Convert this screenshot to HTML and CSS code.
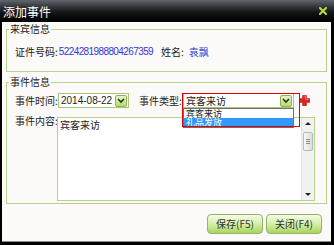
FILE: index.html
```html
<!DOCTYPE html>
<html lang="zh">
<head>
<meta charset="utf-8">
<link rel="stylesheet" href="styles.css">
</head>
<body>
<div class="window">
  <div class="titlebar">
    <span class="title">添加事件</span>
    <svg class="close" width="8" height="8" viewBox="0 0 8 8"><path d="M1 1L7 7M7 1L1 7" stroke="#b7dd3c" stroke-width="2" stroke-linecap="square"/></svg>
  </div>
  <div class="body">
    <fieldset class="fs fs1">
      <legend>来宾信息</legend>
      <div class="info-row">
        <span>证件号码:</span><span class="blue num">5224281988804267359</span><span class="name-label">姓名:</span><span class="blue">袁飘</span>
      </div>
    </fieldset>
    <fieldset class="fs fs2">
      <legend>事件信息</legend>
      <div class="form-row">
        <span class="label">事件时间:</span>
        <div class="select date">
          <span class="select-text num2">2014-08-22</span>
          <span class="arrow"><svg width="8" height="6" viewBox="0 0 8 6"><path d="M1 1L4 4L7 1" fill="none" stroke="#2b3320" stroke-width="1.6"/></svg></span>
        </div>
        <span class="label type-label">事件类型:</span>
        <div class="select-wrap">
          <div class="select type">
            <span class="select-text">宾客来访</span>
            <span class="arrow"><svg width="8" height="6" viewBox="0 0 8 6"><path d="M1 1L4 4L7 1" fill="none" stroke="#2b3320" stroke-width="1.6"/></svg></span>
          </div>
          <div class="droplist">
            <div class="item"><span class="item-text">宾客来访</span></div>
            <div class="item selected"><span class="item-text">礼品发放</span></div>
          </div>
          <div class="redbox"></div>
        </div>
        <svg class="plus" width="11" height="11" viewBox="0 0 12 12"><path d="M4 0.5H8V4H11.5V8H8V11.5H4V8H0.5V4H4Z" fill="#e32222" stroke="#b01010" stroke-width="0.8"/><path d="M4.8 1.3H7.2V4.8H10.7" fill="none" stroke="#f88" stroke-width="0.8"/></svg>
      </div>
      <div class="content-row">
        <span class="label label2">事件内容:</span>
        <div class="textarea">
          <div class="ta-text">宾客来访</div>
          <div class="scrollbar">
            <div class="sb-btn"><span class="tri-up"></span></div>
            <div class="thumb"><span></span><span></span><span></span></div>
            <div class="sb-space"></div>
            <div class="sb-btn"><span class="tri-down"></span></div>
          </div>
        </div>
      </div>
    </fieldset>
    <div class="buttons">
      <button class="btn">保存(F5)</button>
      <button class="btn">关闭(F4)</button>
    </div>
  </div>
</div>
</body>
</html>
```
FILE: styles.css
```css
html, body {
  margin: 0;
  padding: 0;
}
body {
  width: 334px;
  height: 245px;
  overflow: hidden;
  font-family: "Liberation Sans", "Noto Sans CJK SC", sans-serif;
  font-size: 10px;
  color: #222;
}
.window {
  width: 334px;
  height: 245px;
  background: #000;
  display: flex;
  flex-direction: column;
  box-sizing: border-box;
  padding-bottom: 3px;
}
.titlebar {
  height: 22px;
  flex: none;
  display: flex;
  align-items: center;
  justify-content: space-between;
  background: linear-gradient(to bottom, #61666c 0%, #34383c 30%, #101214 60%, #000 100%);
  padding: 0 7px 0 3px;
}
.title {
  color: #fff;
  font-size: 12px;
  font-family: "Noto Sans CJK SC", sans-serif;
  line-height: 14px;
  padding-top: 2px;
}
.close {
  display: block;
  margin-top: -1px;
}
.body {
  flex: 1;
  margin: 0 3px 0 2px;
  background: #fbfaf8;
  border-bottom: 1px solid #8a8a8a;
  padding: 1px 0 0 4px;
  display: flex;
  flex-direction: column;
}
.fs {
  display: block;
  margin: 0;
  padding: 0;
  border: 1px solid #b6d28c;
  box-sizing: border-box;
  width: 321px;
  min-width: 0;
}
.fs legend {
  font-family: "Noto Sans CJK SC", sans-serif;
  font-size: 10px;
  line-height: 12px;
  padding: 0 1px;
  margin-left: 2px;
  color: #222;
}
.fs1 {
  height: 49px;
}
.fs2 {
  height: 128px;
  margin-top: 4px;
}
.info-row {
  margin-top: 11px;
  padding-left: 8px;
  line-height: 12px;
  display: flex;
  white-space: nowrap;
  font-family: "Noto Sans CJK SC", sans-serif;
}
.blue {
  color: #3535d6;
}
.num {
  font-family: "Liberation Sans", sans-serif;
  letter-spacing: -0.6px;
  margin-left: 1px;
}
.name-label {
  margin-left: 8px;
  margin-right: 5px;
}
.form-row {
  margin-top: 5px;
  padding-left: 8px;
  height: 15px;
  display: flex;
  align-items: center;
}
.label {
  font-family: "Noto Sans CJK SC", sans-serif;
  width: 43px;
  flex: none;
  line-height: 12px;
  white-space: nowrap;
}
.type-label {
  margin-left: 10px;
  width: 44px;
}
.select {
  height: 15px;
  box-sizing: border-box;
  border: 1px solid #a8c57f;
  background: #fff;
  display: flex;
  align-items: center;
  justify-content: space-between;
  padding: 0 1px 0 2px;
}
.select-text {
  font-family: "Noto Sans CJK SC", sans-serif;
  line-height: 12px;
}
.num2 {
  font-family: "Liberation Sans", sans-serif;
}
.date {
  width: 71px;
}
.select-wrap {
  position: relative;
  width: 111px;
  height: 15px;
}
.type {
  width: 111px;
}
.arrow {
  width: 12px;
  height: 12px;
  box-sizing: border-box;
  border: 1px solid #8fb356;
  border-radius: 2px;
  background: linear-gradient(to bottom, #e6f5c4, #b5dc72);
  display: flex;
  align-items: center;
  justify-content: center;
}
.arrow svg {
  display: block;
}
.droplist {
  position: absolute;
  left: 0;
  top: 15px;
  width: 111px;
  height: 20px;
  box-sizing: border-box;
  border: 1px solid #707070;
  background: #fff;
  overflow: hidden;
}
.item {
  height: 9px;
  line-height: 9px;
  padding-left: 2px;
  overflow: hidden;
  font-family: "Noto Sans CJK SC", sans-serif;
  font-size: 9px;
}
.item.selected {
  background: #3399ff;
  color: #fff;
}
.redbox {
  position: absolute;
  left: -1px;
  top: 0;
  width: 118px;
  height: 34px;
  box-sizing: border-box;
  border: 1px solid #e00000;
  pointer-events: none;
}
.plus {
  display: block;
  margin-left: 5px;
}
.content-row {
  margin-top: 9px;
  padding-left: 8px;
  display: flex;
  align-items: flex-start;
}
.label2 {
  width: 42px;
  margin-top: -2px;
}
.textarea {
  width: 258px;
  height: 84px;
  box-sizing: border-box;
  border: 1px solid #b6d28c;
  background: #fff;
  display: flex;
}
.ta-text {
  flex: 1;
  font-family: "Noto Sans CJK SC", sans-serif;
  line-height: 12px;
  padding: 1px 0 0 2px;
}
.scrollbar {
  width: 13px;
  box-sizing: border-box;
  background: #f1f1f1;
  border-left: 1px solid #e2e2e2;
  display: flex;
  flex-direction: column;
  align-items: center;
}
.sb-btn {
  height: 11px;
  width: 100%;
  display: flex;
  align-items: center;
  justify-content: center;
}
.tri-up {
  width: 0;
  height: 0;
  border-left: 3px solid transparent;
  border-right: 3px solid transparent;
  border-bottom: 3px solid #222;
}
.tri-down {
  width: 0;
  height: 0;
  border-left: 3px solid transparent;
  border-right: 3px solid transparent;
  border-top: 3px solid #222;
}
.thumb {
  margin-top: 3px;
  width: 10px;
  height: 19px;
  box-sizing: border-box;
  border: 1px solid #b9b9b9;
  border-radius: 2px;
  background: linear-gradient(to right, #f7f7f7, #dcdcdc);
  display: flex;
  flex-direction: column;
  align-items: center;
  justify-content: center;
  gap: 1px;
}
.thumb span {
  width: 4px;
  height: 1px;
  background: #8a8a8a;
}
.sb-space {
  flex: 1;
}
.buttons {
  display: flex;
  justify-content: flex-end;
  gap: 3px;
  margin-top: 10px;
  margin-right: 9px;
}
.btn {
  width: 56px;
  height: 20px;
  box-sizing: border-box;
  margin: 0;
  padding: 0;
  border: 1px solid #94b26c;
  border-radius: 4px;
  background: linear-gradient(to bottom, #f5fbe6 0%, #d9f0ae 45%, #a7d65e 100%);
  font-family: "Noto Sans CJK SC", sans-serif;
  font-size: 10px;
  color: #333;
  line-height: 12px;
}
```
